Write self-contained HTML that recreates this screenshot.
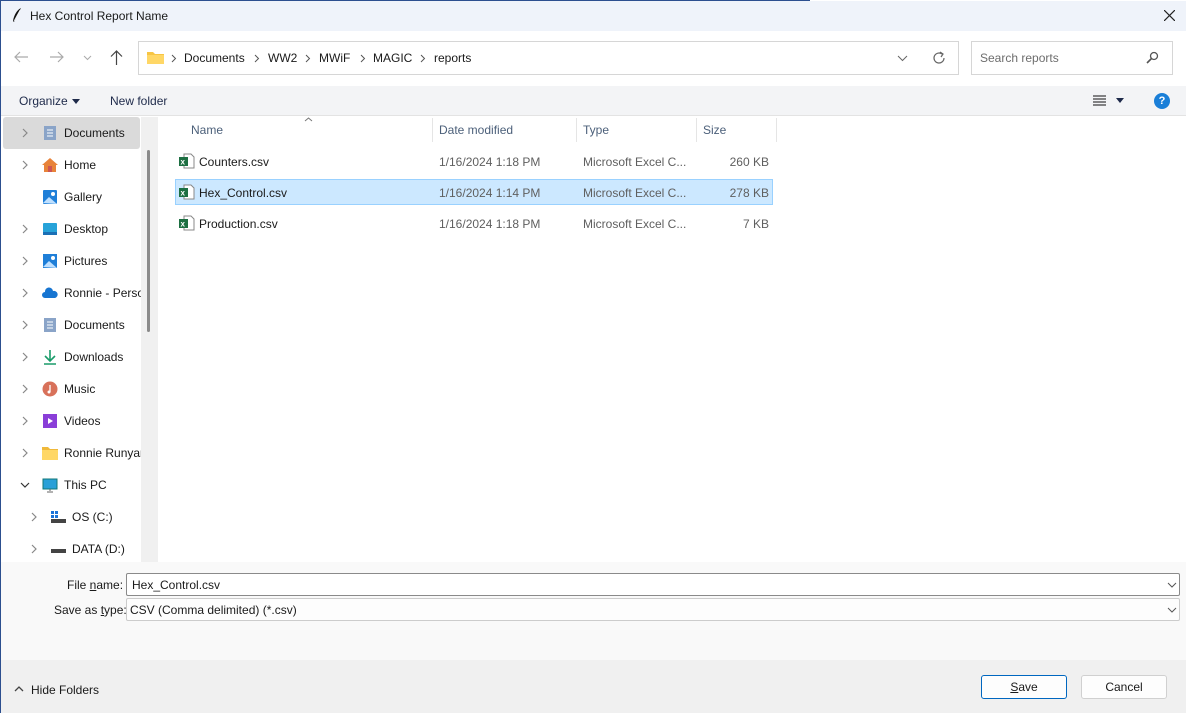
<!DOCTYPE html>
<html><head><meta charset="utf-8"><style>
*{margin:0;padding:0;box-sizing:border-box}
body{width:1186px;height:713px;overflow:hidden;background:#fff;font-family:"Liberation Sans",sans-serif;font-size:12px;color:#1a1a1a;position:relative}
.a{position:absolute;white-space:nowrap}
.nav{position:absolute;left:0;width:141px;height:32px;overflow:hidden;white-space:nowrap}
.nav .ch{position:absolute;left:22px;top:11px}
.nav .ic{position:absolute;left:42px;top:8px;width:16px;height:16px}
.nav .t{position:absolute;left:64px;top:9px;white-space:nowrap}
.row{position:absolute;left:175px;width:598px;height:26px}
.row span{position:absolute;top:7px}
.g{color:#5f5f5f}
.xl{position:absolute;left:4px;top:5px;width:16px;height:16px}
</style></head><body>
<svg width="0" height="0" style="position:absolute"><defs><path id="chv" d="M1 1l4 4-4 4" stroke="#888" fill="none" stroke-width="1.2"/></defs></svg>
<div class="a" style="left:0;top:0;width:1px;height:713px;background:#2c4f8f"></div>
<div class="a" style="left:0;top:0;width:810px;height:1px;background:#2c4f8f"></div>
<div class="a" style="left:1px;top:1px;width:1185px;height:30px;background:#eff3fa"></div>
<svg class="a" style="left:11px;top:7px" width="12" height="16" viewBox="0 0 12 16"><path d="M10 1C6 3 3 8 2 14l1 1C5 10 8 5 10 1z" fill="#111"/><path d="M3 14 L9 3" stroke="#fff" stroke-width="0.6"/></svg>
<div class="a" style="left:30px;top:9px;font-size:12px">Hex Control Report Name</div>
<svg class="a" style="left:1164px;top:10px" width="11" height="11"><path d="M0 0L11 11M11 0L0 11" stroke="#222" stroke-width="1.2"/></svg>
<svg class="a" style="left:14px;top:51px" width="15" height="12"><path d="M14 6H1M6 1L1 6l5 5" stroke="#aaa" fill="none" stroke-width="1.2"/></svg>
<svg class="a" style="left:49px;top:51px" width="15" height="12"><path d="M1 6h13M9 1l5 5-5 5" stroke="#aaa" fill="none" stroke-width="1.2"/></svg>
<svg class="a" style="left:83px;top:55px" width="9" height="6"><path d="M1 1l3.5 3.5L8 1" stroke="#aaa" fill="none"/></svg>
<svg class="a" style="left:110px;top:50px" width="13" height="15"><path d="M6.5 15V1M1 6.5l5.5-5.5 5.5 5.5" stroke="#444" fill="none" stroke-width="1.2"/></svg>
<div class="a" style="left:138px;top:41px;width:821px;height:34px;border:1px solid #d6d6d6"></div>
<svg class="a" style="left:147px;top:50px" width="17" height="14"><path d="M0 2h6l2 2h9v10H0z" fill="#f7c544"/><rect x="0" y="5" width="17" height="9" fill="#ffd766"/></svg>
<svg class="a" style="left:171px;top:54px" width="6" height="10"><path d="M1 1l3.5 3.5L1 8" stroke="#555" fill="none"/></svg>
<div class="a" style="left:184px;top:51px">Documents</div>
<svg class="a" style="left:254px;top:54px" width="6" height="10"><path d="M1 1l3.5 3.5L1 8" stroke="#555" fill="none"/></svg>
<div class="a" style="left:268px;top:51px">WW2</div>
<svg class="a" style="left:305px;top:54px" width="6" height="10"><path d="M1 1l3.5 3.5L1 8" stroke="#555" fill="none"/></svg>
<div class="a" style="left:319px;top:51px">MWiF</div>
<svg class="a" style="left:360px;top:54px" width="6" height="10"><path d="M1 1l3.5 3.5L1 8" stroke="#555" fill="none"/></svg>
<div class="a" style="left:373px;top:51px">MAGIC</div>
<svg class="a" style="left:420px;top:54px" width="6" height="10"><path d="M1 1l3.5 3.5L1 8" stroke="#555" fill="none"/></svg>
<div class="a" style="left:434px;top:51px">reports</div>
<svg class="a" style="left:897px;top:55px" width="11" height="7"><path d="M1 1l4.5 4.5L10 1" stroke="#666" fill="none"/></svg>
<svg class="a" style="left:932px;top:51px" width="14" height="14"><path d="M12 7A5 5 0 1 1 10 3" stroke="#666" fill="none" stroke-width="1.2"/><path d="M8 1l3 2-2 3" stroke="#666" fill="none" stroke-width="1.2"/></svg>
<div class="a" style="left:971px;top:41px;width:202px;height:34px;border:1px solid #d6d6d6"></div>
<div class="a" style="left:980px;top:51px;color:#6d6d6d">Search reports</div>
<svg class="a" style="left:1146px;top:51px" width="13" height="13"><circle cx="8" cy="5" r="3.5" stroke="#555" fill="none" stroke-width="1.3"/><path d="M5.5 7.5L1 12" stroke="#555" stroke-width="1.6"/></svg>
<div class="a" style="left:1px;top:86px;width:1185px;height:30px;background:#f3f4f6;border-bottom:1px solid #e3e3e3"></div>
<div class="a" style="left:19px;top:94px;color:#1e2a4a">Organize</div>
<div class="a" style="left:72px;top:99px;width:0;height:0;border-left:4px solid transparent;border-right:4px solid transparent;border-top:5px solid #1e2a4a"></div>
<div class="a" style="left:110px;top:94px;color:#1e2a4a">New folder</div>
<svg class="a" style="left:1093px;top:95px" width="13" height="11"><path d="M0 1h13M0 4h13M0 7h13M0 10h13" stroke="#111"/></svg>
<div class="a" style="left:1116px;top:98px;width:0;height:0;border-left:4px solid transparent;border-right:4px solid transparent;border-top:5px solid #1e2a4a"></div>
<div class="a" style="left:1154px;top:93px;width:16px;height:16px;border-radius:50%;background:#1a7fd8;color:#fff;font-weight:bold;font-size:11px;text-align:center;line-height:16px">?</div>
<div class="a" style="left:141px;top:117px;width:17px;height:445px;background:#f0f0f0"></div>
<div class="a" style="left:147px;top:150px;width:3px;height:182px;background:#8a8a8a;border-radius:2px"></div>
<div class="a" style="left:3px;top:117px;width:137px;height:32px;background:#dadada;border-radius:3px"></div>
<div class="nav" style="top:117px"><svg class="ch" width="7" height="10"><use href="#chv"/></svg><svg class="ic" viewBox="0 0 16 16"><rect x="2" y="1" width="12" height="14" fill="#8aa4c8"/><path d="M5 5h6M5 8h6M5 11h6" stroke="#fff"/></svg><span class="t">Documents</span></div>
<div class="nav" style="top:149px"><svg class="ch" width="7" height="10"><use href="#chv"/></svg><svg class="ic" viewBox="0 0 16 16"><path d="M8 1L0 8h2v7h12V8h2z" fill="#e8833a"/><rect x="6" y="9" width="4" height="6" fill="#c55"/></svg><span class="t">Home</span></div>
<div class="nav" style="top:181px"><svg class="ic" viewBox="0 0 16 16"><rect x="1" y="1" width="14" height="14" rx="1" fill="#1f7fd8"/><path d="M1 14l6-6 8 7z" fill="#bfe0ff"/><circle cx="11" cy="5" r="2" fill="#fff"/></svg><span class="t">Gallery</span></div>
<div class="nav" style="top:213px"><svg class="ch" width="7" height="10"><use href="#chv"/></svg><svg class="ic" viewBox="0 0 16 16"><rect x="1" y="2" width="14" height="12" rx="1" fill="#27a3d9"/><rect x="1" y="11" width="14" height="3" fill="#1b6fb5"/></svg><span class="t">Desktop</span></div>
<div class="nav" style="top:245px"><svg class="ch" width="7" height="10"><use href="#chv"/></svg><svg class="ic" viewBox="0 0 16 16"><rect x="1" y="1" width="14" height="14" fill="#1f7fd8"/><path d="M1 14l6-6 8 7z" fill="#bfe0ff"/><circle cx="11" cy="5" r="2" fill="#fff"/></svg><span class="t">Pictures</span></div>
<div class="nav" style="top:277px"><svg class="ch" width="7" height="10"><use href="#chv"/></svg><svg class="ic" viewBox="0 0 16 16"><path d="M3 13a3 3 0 0 1 0-6 4 4 0 0 1 8-1 3.5 3.5 0 0 1 2 7z" fill="#1775d1"/></svg><span class="t">Ronnie - Perso</span></div>
<div class="nav" style="top:309px"><svg class="ch" width="7" height="10"><use href="#chv"/></svg><svg class="ic" viewBox="0 0 16 16"><rect x="2" y="1" width="12" height="14" fill="#8aa4c8"/><path d="M5 5h6M5 8h6M5 11h6" stroke="#fff"/></svg><span class="t">Documents</span></div>
<div class="nav" style="top:341px"><svg class="ch" width="7" height="10"><use href="#chv"/></svg><svg class="ic" viewBox="0 0 16 16"><path d="M8 1v10M3 7l5 5 5-5M2 15h12" stroke="#1a9c6a" stroke-width="1.6" fill="none"/></svg><span class="t">Downloads</span></div>
<div class="nav" style="top:373px"><svg class="ch" width="7" height="10"><use href="#chv"/></svg><svg class="ic" viewBox="0 0 16 16"><circle cx="8" cy="8" r="7.5" fill="#d8715a"/><path d="M8 4v7" stroke="#fff" stroke-width="1.3"/><circle cx="7" cy="11" r="1.5" fill="#fff"/></svg><span class="t">Music</span></div>
<div class="nav" style="top:405px"><svg class="ch" width="7" height="10"><use href="#chv"/></svg><svg class="ic" viewBox="0 0 16 16"><rect x="1" y="1" width="14" height="14" fill="#8a3ed8"/><path d="M6 5l5 3-5 3z" fill="#fff"/></svg><span class="t">Videos</span></div>
<div class="nav" style="top:437px"><svg class="ch" width="7" height="10"><use href="#chv"/></svg><svg class="ic" viewBox="0 0 16 16"><path d="M0 2h6l2 2h8v11H0z" fill="#f0b93a"/><rect x="0" y="5" width="16" height="10" fill="#ffd766"/></svg><span class="t">Ronnie Runyar</span></div>
<div class="nav" style="top:469px"><svg class="ch" style="left:20px;top:13px" width="10" height="7"><path d="M1 1l4 4 4-4" stroke="#333" fill="none" stroke-width="1.2"/></svg><svg class="ic" viewBox="0 0 16 16"><rect x="1" y="2" width="14" height="10" fill="#2aa0d8" stroke="#177"/><path d="M8 12v2M5 15h6" stroke="#666"/></svg><span class="t">This PC</span></div>
<div class="nav" style="top:501px"><svg class="ch" style="left:31px" width="7" height="10"><use href="#chv"/></svg><svg class="ic" style="left:50px" viewBox="0 0 16 16"><rect x="1" y="2" width="3" height="3" fill="#1a73d8"/><rect x="5" y="2" width="3" height="3" fill="#1a73d8"/><rect x="1" y="6" width="3" height="3" fill="#1a73d8"/><rect x="5" y="6" width="3" height="3" fill="#1a73d8"/><rect x="1" y="10" width="15" height="4" fill="#444"/></svg><span class="t" style="left:72px">OS (C:)</span></div>
<div class="nav" style="top:533px"><svg class="ch" style="left:31px" width="7" height="10"><use href="#chv"/></svg><svg class="ic" style="left:50px" viewBox="0 0 16 16"><rect x="1" y="8" width="15" height="4" fill="#444"/></svg><span class="t" style="left:72px">DATA (D:)</span></div>
<svg class="a" style="left:304px;top:117px" width="9" height="5"><path d="M1 4l3.5-3L8 4" stroke="#777" fill="none"/></svg>
<div class="a" style="left:191px;top:123px;color:#4c607a">Name</div>
<div class="a" style="left:432px;top:118px;width:1px;height:24px;background:#e5e5e5"></div>
<div class="a" style="left:439px;top:123px;color:#4c607a">Date modified</div>
<div class="a" style="left:576px;top:118px;width:1px;height:24px;background:#e5e5e5"></div>
<div class="a" style="left:583px;top:123px;color:#4c607a">Type</div>
<div class="a" style="left:696px;top:118px;width:1px;height:24px;background:#e5e5e5"></div>
<div class="a" style="left:703px;top:123px;color:#4c607a">Size</div>
<div class="a" style="left:776px;top:118px;width:1px;height:24px;background:#e5e5e5"></div>
<div class="row" style="top:148px"><svg class="xl" viewBox="0 0 16 16"><path d="M5 1h7l3 3v11H5z" fill="#fff" stroke="#888"/><rect x="0" y="4" width="9" height="9" fill="#1d6f42"/><text x="1.5" y="11.5" font-size="8" fill="#fff" font-family="Liberation Sans" font-weight="bold">x</text></svg><span style="left:24px">Counters.csv</span><span class="g" style="left:264px">1/16/2024 1:18 PM</span><span class="g" style="left:408px">Microsoft Excel C...</span><span class="g" style="right:4px">260 KB</span></div>
<div class="row" style="top:179px;background:#cce8ff;border:1px solid #99d1ff"><svg class="xl" style="left:3px;top:4px" viewBox="0 0 16 16"><path d="M5 1h7l3 3v11H5z" fill="#fff" stroke="#888"/><rect x="0" y="4" width="9" height="9" fill="#1d6f42"/><text x="1.5" y="11.5" font-size="8" fill="#fff" font-family="Liberation Sans" font-weight="bold">x</text></svg><span style="left:23px;top:6px">Hex_Control.csv</span><span class="g" style="left:263px;top:6px">1/16/2024 1:14 PM</span><span class="g" style="left:407px;top:6px">Microsoft Excel C...</span><span class="g" style="right:3px;top:6px">278 KB</span></div>
<div class="row" style="top:210px"><svg class="xl" viewBox="0 0 16 16"><path d="M5 1h7l3 3v11H5z" fill="#fff" stroke="#888"/><rect x="0" y="4" width="9" height="9" fill="#1d6f42"/><text x="1.5" y="11.5" font-size="8" fill="#fff" font-family="Liberation Sans" font-weight="bold">x</text></svg><span style="left:24px">Production.csv</span><span class="g" style="left:264px">1/16/2024 1:18 PM</span><span class="g" style="left:408px">Microsoft Excel C...</span><span class="g" style="right:4px">7 KB</span></div>
<div class="a" style="left:1px;top:562px;width:1185px;height:98px;background:#f9f9f9"></div>
<div class="a" style="left:67px;top:578px">File <u>n</u>ame:</div>
<div class="a" style="left:126px;top:573px;width:1054px;height:23px;background:#fff;border:1px solid #8a8a8a;border-radius:2px"></div>
<div class="a" style="left:132px;top:578px">Hex_Control.csv</div>
<div class="a" style="left:54px;top:603px">Save as <u>t</u>ype:</div>
<div class="a" style="left:126px;top:598px;width:1054px;height:23px;background:#fdfdfd;border:1px solid #ccc;border-radius:2px"></div>
<div class="a" style="left:130px;top:603px">CSV (Comma delimited) (*.csv)</div>
<svg class="a" style="left:1167px;top:582px" width="10" height="6"><path d="M1 1l4 4 4-4" stroke="#555" fill="none"/></svg>
<svg class="a" style="left:1167px;top:607px" width="10" height="6"><path d="M1 1l4 4 4-4" stroke="#555" fill="none"/></svg>
<div class="a" style="left:1px;top:660px;width:1185px;height:53px;background:#f0f0f0"></div>
<svg class="a" style="left:14px;top:686px" width="10" height="6"><path d="M1 5l4-4 4 4" stroke="#444" fill="none" stroke-width="1.3"/></svg>
<div class="a" style="left:31px;top:683px">Hide Folders</div>
<div class="a" style="left:981px;top:675px;width:86px;height:24px;background:#fdfdfd;border:1px solid #0067c0;border-radius:3px;text-align:center;line-height:22px"><u>S</u>ave</div>
<div class="a" style="left:1081px;top:675px;width:86px;height:24px;background:#fdfdfd;border:1px solid #d0d0d0;border-radius:3px;text-align:center;line-height:22px">Cancel</div>
</body></html>
